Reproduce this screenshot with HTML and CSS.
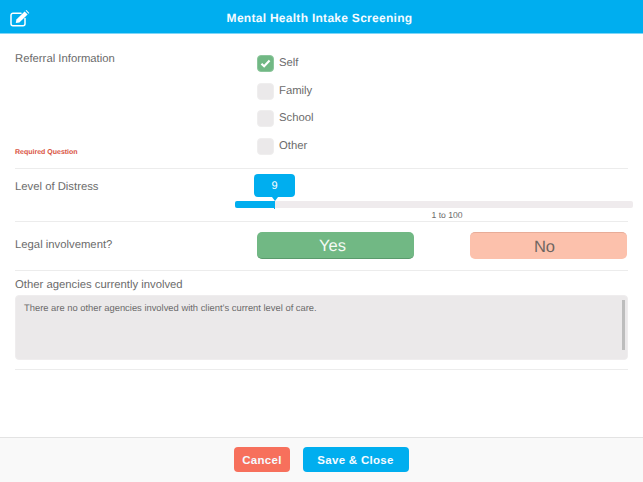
FILE: index.html
```html
<!DOCTYPE html>
<html lang="en">
<head>
<meta charset="utf-8">
<title>Mental Health Intake Screening</title>
<link rel="stylesheet" href="styles.css">
</head>
<body>
<div class="page">
  <header class="header">
    <svg class="edit-icon" viewBox="0 0 20 17" width="20" height="17" aria-hidden="true">
      <path d="M15 8.5v5.2a2 2 0 0 1-2 2H3a2 2 0 0 1-2-2V5.2a2 2 0 0 1 2-2h8" fill="none" stroke="#fff" stroke-width="1.5" stroke-linecap="round"/>
      <path d="M6.4 9.4 14.6 1.5l3 2.9-8.2 8-3.6.7z" fill="#fff"/>
      <path d="M15.6.6l.8-.5 2.9 2.8-.7.8z" fill="#fff"/>
    </svg>
    <h1 class="title">Mental Health Intake Screening</h1>
  </header>
  <main class="form">
    <section class="row row-referral">
      <div class="referral-left">
        <div class="label">Referral Information</div>
        <div class="required">Required Question</div>
      </div>
      <ul class="checks">
        <li class="check">
          <span class="box box-on">
            <svg viewBox="0 0 12 10" width="11" height="9" aria-hidden="true"><path d="M1.5 5.2 4.5 8 10.5 1.8" fill="none" stroke="#fff" stroke-width="2.4"/></svg>
          </span>Self
        </li>
        <li class="check"><span class="box"></span>Family</li>
        <li class="check"><span class="box"></span>School</li>
        <li class="check"><span class="box"></span>Other</li>
      </ul>
    </section>
    <section class="row row-distress">
      <div class="label distress-label">Level of Distress</div>
      <div class="slider">
        <div class="bubble">9</div>
        <div class="track"><div class="fill"></div></div>
        <div class="range">1 to 100</div>
      </div>
    </section>
    <section class="row row-legal">
      <div class="label legal-label">Legal involvement?</div>
      <div class="choice choice-yes">Yes</div>
      <div class="choice choice-no">No</div>
    </section>
    <section class="row row-agencies">
      <div class="label">Other agencies currently involved</div>
      <div class="textarea">
        There are no other agencies involved with client’s current level of care.
        <span class="scrollbar"></span>
      </div>
    </section>
  </main>
  <footer class="footer">
    <button class="btn btn-cancel">Cancel</button>
    <button class="btn btn-save">Save &amp; Close</button>
  </footer>
</div>
</body>
</html>
```
FILE: styles.css
```css
* { box-sizing: border-box; }
html, body { margin: 0; padding: 0; }
body { font-family: "Liberation Sans", Arial, sans-serif; color: #6b6b6b; background: #fff; text-rendering: geometricPrecision; }
.page { width: 643px; height: 482px; display: flex; flex-direction: column; overflow: hidden; }

.header { height: 34px; padding-top: 3px; background: #00aeef; border-bottom: 1px solid #7fd6f7; display: flex; align-items: center; justify-content: center; position: relative; flex: none; }
.edit-icon { position: absolute; left: 10px; top: 10px; }
.title { margin: 0 4px 0 0; font-size: 12px; font-weight: bold; color: #f4fbff; letter-spacing: 0.28px; }

.form { flex: 1; min-height: 0; padding: 0 15px; }
.row { border-bottom: 1px solid #ececec; display: flex; }
.label { font-size: 11.3px; line-height: 14px; color: #6b6b6b; }

.row-referral { height: 135px; }
.referral-left { width: 242px; padding: 18px 0 11px; display: flex; flex-direction: column; justify-content: space-between; flex: none; }
.required { font-size: 7px; font-weight: bold; line-height: 8px; color: #d9533f; }
.checks { list-style: none; margin: 0; padding: 21px 0 0; }
.check { height: 27.5px; display: flex; align-items: flex-start; font-size: 11.3px; line-height: 16px; color: #6b6b6b; gap: 5px; }
.box { width: 17px; height: 17px; border-radius: 4px; background: #ebe9ea; border: 1px solid #efeeee; display: flex; align-items: center; justify-content: center; }
.box-on { background: #71b884; border-color: #8cc69c; }

.row-distress { height: 53px; }
.distress-label { width: 220px; padding-top: 11px; flex: none; }
.slider { flex: none; width: 398px; padding-top: 5px; }
.bubble { position: relative; width: 41px; height: 23px; margin-left: 19px; border-radius: 4px; background: #00aeef; color: #fff; font-size: 11px; line-height: 24px; text-align: center; }
.bubble::after { content: ""; position: absolute; right: 0; bottom: -4px; left: 0; margin: 0 auto; width: 0; height: 0; border-left: 3px solid transparent; border-right: 3px solid transparent; border-top: 4px solid #00aeef; }
.track { height: 7px; margin-top: 4px; border-radius: 2px; background: #efebed; }
.fill { position: relative; width: 40px; height: 100%; border-radius: 2px 0 0 2px; background: #00aeef; }
.fill::after { content: ""; position: absolute; right: 0; top: 0; width: 1px; height: 8px; background: #00aeef; }
.range { font-size: 8.6px; line-height: 10px; text-align: center; margin-top: 2px; color: #6b6b6b; padding-left: 26px; }

.row-legal { height: 49px; align-items: flex-start; }
.legal-label { width: 242px; padding-top: 16px; flex: none; }
.choice { width: 157px; height: 27px; margin-top: 10px; border-radius: 5px; text-align: center; font-size: 16.5px; line-height: 28px; }
.choice-yes { background: #71b884; color: #f4faf5; border-bottom: 1px solid #5a9a6c; padding-right: 6px; }
.choice-no { background: #fcc1ac; color: #6e6560; margin-left: 56px; border-top: 1px solid #e8ac98; padding-right: 8px; }

.row-agencies { height: 99px; flex-direction: column; padding-top: 7px; }
.textarea { position: relative; height: 65px; margin-top: 3px; border-radius: 4px; background: #ebe9ea; border: 1px solid #efedee; padding: 6px 8px; font-size: 9.4px; line-height: 12px; color: #6b6b6b; }
.scrollbar { position: absolute; right: 2px; top: 4px; width: 3px; height: 50px; background: #bdbdbd; }

.footer { height: 45px; flex: none; background: #f9f9f9; border-top: 1px solid #e3e3e3; display: flex; align-items: flex-start; justify-content: center; gap: 13px; padding-top: 9px; }
.btn { height: 25px; border: 0; border-radius: 4px; padding: 0; color: #f5fbff; font-family: inherit; font-size: 11.5px; font-weight: bold; letter-spacing: 0.3px; }
.btn-cancel { width: 56px; background: #f7705c; margin-left: -1px; padding-left: 1px; }
.btn-save { width: 106px; background: #00aeef; }
```
